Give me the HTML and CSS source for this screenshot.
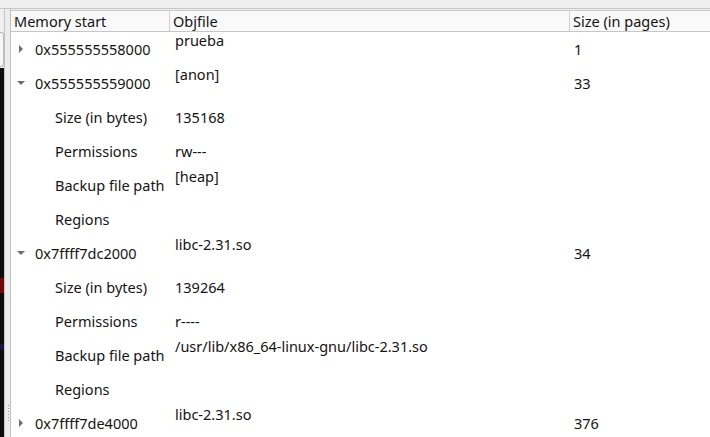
FILE: index.html
```html
<!DOCTYPE html>
<html>
<head>
<meta charset="utf-8">
<link rel="stylesheet" href="styles.css">
</head>
<body>
<div class="window">
  <div class="topbar"></div>
  <div class="main">
    <div class="leftpanel">
      <div class="lp-space"></div>
      <div class="lp-box"></div>
      <div class="lp-dark">
        <div class="lp-red"></div>
        <div class="lp-blue"></div>
      </div>
    </div>
    <div class="splitter">
      <div class="grip"><span></span><span></span><span></span><span></span><span></span><span></span></div>
    </div>
    <div class="tree">
      <div class="header">
        <div class="hcell c1">Memory start</div>
        <div class="hcell c2">Objfile</div>
        <div class="hcell c3">Size (in pages)</div>
      </div>
      <div class="row">
        <div class="cell c1"><span class="arrow right"></span>0x555555558000</div>
        <div class="cell c2 top">prueba</div>
        <div class="cell c3">1</div>
      </div>
      <div class="row">
        <div class="cell c1"><span class="arrow down"></span>0x555555559000</div>
        <div class="cell c2 top">[anon]</div>
        <div class="cell c3">33</div>
      </div>
      <div class="row">
        <div class="cell c1 child">Size (in bytes)</div>
        <div class="cell c2">135168</div>
        <div class="cell c3"></div>
      </div>
      <div class="row">
        <div class="cell c1 child">Permissions</div>
        <div class="cell c2">rw---</div>
        <div class="cell c3"></div>
      </div>
      <div class="row">
        <div class="cell c1 child">Backup file path</div>
        <div class="cell c2 top">[heap]</div>
        <div class="cell c3"></div>
      </div>
      <div class="row">
        <div class="cell c1 child">Regions</div>
        <div class="cell c2"></div>
        <div class="cell c3"></div>
      </div>
      <div class="row">
        <div class="cell c1"><span class="arrow down"></span>0x7ffff7dc2000</div>
        <div class="cell c2 top">libc-2.31.so</div>
        <div class="cell c3">34</div>
      </div>
      <div class="row">
        <div class="cell c1 child">Size (in bytes)</div>
        <div class="cell c2">139264</div>
        <div class="cell c3"></div>
      </div>
      <div class="row">
        <div class="cell c1 child">Permissions</div>
        <div class="cell c2">r----</div>
        <div class="cell c3"></div>
      </div>
      <div class="row">
        <div class="cell c1 child">Backup file path</div>
        <div class="cell c2 top">/usr/lib/x86_64-linux-gnu/libc-2.31.so</div>
        <div class="cell c3"></div>
      </div>
      <div class="row">
        <div class="cell c1 child">Regions</div>
        <div class="cell c2"></div>
        <div class="cell c3"></div>
      </div>
      <div class="row">
        <div class="cell c1"><span class="arrow right"></span>0x7ffff7de4000</div>
        <div class="cell c2 top">libc-2.31.so</div>
        <div class="cell c3">376</div>
      </div>
    </div>
  </div>
</div>
</body>
</html>
```

FILE: styles.css
```css
html, body {
  margin: 0;
  padding: 0;
  width: 710px;
  height: 437px;
  overflow: hidden;
  background: #efefef;
  font-family: "Noto Sans", "Open Sans", sans-serif;
  font-size: 14.5px;
  color: #141414;
}

.window {
  display: flex;
  flex-direction: column;
  height: 437px;
}

.topbar {
  height: 8px;
  flex: none;
  background: #efefef;
  border-bottom: 1px solid #c6c6c6;
}

.main {
  flex: 1;
  display: flex;
  min-height: 0;
}

.leftpanel {
  width: 4px;
  flex: none;
  display: flex;
  flex-direction: column;
  border-right: 1px solid #c4c4c4;
}

.lp-space {
  height: 23px;
  flex: none;
}

.lp-box {
  height: 35px;
  flex: none;
  background: #f7f7f7;
  border: 1px solid #b8b8b8;
  border-left: none;
  border-radius: 0 3px 3px 0;
  box-sizing: border-box;
}

.lp-dark {
  flex: 1;
  margin-top: 1px;
  background: #0d0d0d;
  display: flex;
  flex-direction: column;
}

.lp-red {
  margin-top: 210px;
  height: 15px;
  background: #6e0a0a;
}

.lp-blue {
  margin-top: 51px;
  height: 6px;
  background: #151542;
}

.splitter {
  width: 6px;
  flex: none;
  background: #ececec;
  border-right: 1px solid #c0c0c0;
  display: flex;
  flex-direction: column;
  justify-content: flex-end;
  padding-bottom: 16px;
  box-sizing: border-box;
}

.grip {
  display: flex;
  flex-direction: column;
  gap: 2px;
  padding-left: 3px;
}

.grip span {
  width: 1px;
  height: 1px;
  background: #9a9a9a;
}

.tree {
  flex: 1;
  margin-top: 1px;
  background: #ffffff;
  border-top: 1px solid #c9c9c9;
  display: flex;
  flex-direction: column;
  min-width: 0;
}

.header {
  display: grid;
  grid-template-columns: 159px 400px 1fr;
  height: 20px;
  background: #f9f9f9;
  border-bottom: 1px solid #c6c6c6;
  flex: none;
}

.hcell {
  display: flex;
  align-items: center;
  padding-left: 3px;
  border-right: 1px solid #d0d0d0;
  white-space: nowrap;
  line-height: 20px;
}

.hcell.c3 {
  border-right: none;
}

.row {
  display: grid;
  grid-template-columns: 159px 400px 1fr;
  height: 34px;
  flex: none;
}

.cell {
  display: flex;
  align-items: center;
  white-space: nowrap;
  line-height: 18px;
}

.cell.c1 {
  padding-left: 7px;
}

.cell.c1.child {
  padding-left: 44px;
}

.cell.c2 {
  padding-left: 5px;
}

.cell.c3 {
  padding-left: 4px;
}

.cell.top {
  align-items: flex-start;
  padding-top: 0;
  line-height: 17px;
}

.arrow {
  width: 17px;
  height: 8px;
  flex: none;
  position: relative;
}

.arrow.right::before {
  content: "";
  position: absolute;
  left: 1px;
  top: 0;
  border-left: 4px solid #6d6d6d;
  border-top: 4px solid transparent;
  border-bottom: 4px solid transparent;
}

.arrow.down::before {
  content: "";
  position: absolute;
  left: -1px;
  top: 2px;
  border-top: 4px solid #6d6d6d;
  border-left: 4px solid transparent;
  border-right: 4px solid transparent;
}
```
